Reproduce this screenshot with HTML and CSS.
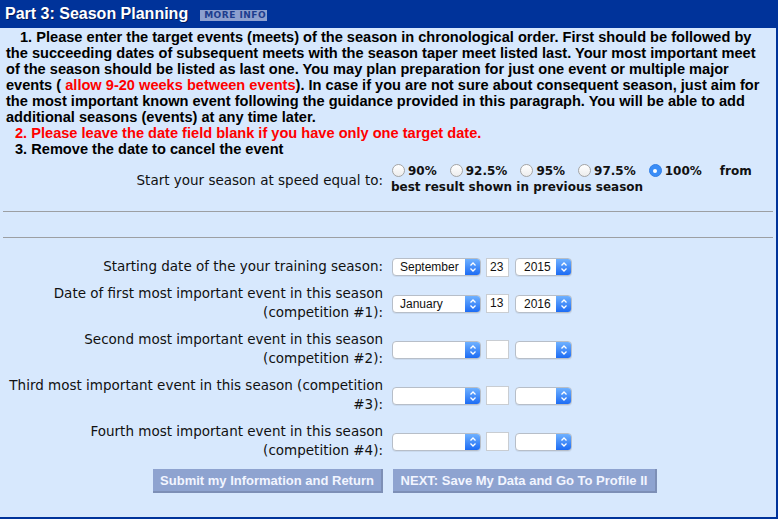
FILE: index.html
```html
<!DOCTYPE html>
<html>
<head>
<meta charset="utf-8">
<link rel="stylesheet" href="styles.css">
</head>
<body>
<div class="panel">
  <div class="header">
    <span class="title">Part 3: Season Planning</span>
    <span class="more">MORE INFO</span>
  </div>
  <div class="content">
    <div class="intro">
      <p class="p1">1. Please enter the target events (meets) of the season in chronological order. First should be followed by<br>the succeeding dates of subsequent meets with the season taper meet listed last. Your most important meet<br>of the season should be listed as last one. You may plan preparation for just one event or multiple major<br>events ( <span class="red">allow 9-20 weeks between events</span>). In case if you are not sure about consequent season, just aim for<br>the most important known event following the guidance provided in this paragraph. You will be able to add<br>additional seasons (events) at any time later.</p>
      <p class="note red">2. Please leave the date field blank if you have only one target date.</p>
      <p class="note">3. Remove the date to cancel the event</p>
    </div>

    <div class="grid speed">
      <div class="lbl">Start your season at speed equal to:</div>
      <div class="opts">
        <div class="opt-line">
          <span class="opt"><span class="radio"></span>90%</span>
          <span class="opt"><span class="radio"></span>92.5%</span>
          <span class="opt"><span class="radio"></span>95%</span>
          <span class="opt"><span class="radio"></span>97.5%</span>
          <span class="opt"><span class="radio on"></span>100%</span>
          <span class="from">from</span>
        </div>
        <div class="opt-sub">best result shown in previous season</div>
      </div>
    </div>

    <div class="rule first"></div>
    <div class="rule second"></div>

    <div class="grid dates">
      <div class="lbl">Starting date of the your training season:</div>
      <div class="ctrls">
        <span class="sel month"><span class="val">September</span><span class="btn"><svg width="14" height="16" viewBox="0 0 14 16"><polyline points="4.5,6.5 7,4 9.5,6.5" /><polyline points="4.5,9.5 7,12 9.5,9.5" /></svg></span></span>
        <span class="day">23</span>
        <span class="sel year"><span class="val">2015</span><span class="btn"><svg width="14" height="16" viewBox="0 0 14 16"><polyline points="4.5,6.5 7,4 9.5,6.5" /><polyline points="4.5,9.5 7,12 9.5,9.5" /></svg></span></span>
      </div>

      <div class="lbl">Date of first most important event in this season<br>(competition #1):</div>
      <div class="ctrls">
        <span class="sel month"><span class="val">January</span><span class="btn"><svg width="14" height="16" viewBox="0 0 14 16"><polyline points="4.5,6.5 7,4 9.5,6.5" /><polyline points="4.5,9.5 7,12 9.5,9.5" /></svg></span></span>
        <span class="day">13</span>
        <span class="sel year"><span class="val">2016</span><span class="btn"><svg width="14" height="16" viewBox="0 0 14 16"><polyline points="4.5,6.5 7,4 9.5,6.5" /><polyline points="4.5,9.5 7,12 9.5,9.5" /></svg></span></span>
      </div>

      <div class="lbl">Second most important event in this season<br>(competition #2):</div>
      <div class="ctrls">
        <span class="sel month"><span class="val"></span><span class="btn"><svg width="14" height="16" viewBox="0 0 14 16"><polyline points="4.5,6.5 7,4 9.5,6.5" /><polyline points="4.5,9.5 7,12 9.5,9.5" /></svg></span></span>
        <span class="day"></span>
        <span class="sel year"><span class="val"></span><span class="btn"><svg width="14" height="16" viewBox="0 0 14 16"><polyline points="4.5,6.5 7,4 9.5,6.5" /><polyline points="4.5,9.5 7,12 9.5,9.5" /></svg></span></span>
      </div>

      <div class="lbl">Third most important event in this season (competition<br>#3):</div>
      <div class="ctrls">
        <span class="sel month"><span class="val"></span><span class="btn"><svg width="14" height="16" viewBox="0 0 14 16"><polyline points="4.5,6.5 7,4 9.5,6.5" /><polyline points="4.5,9.5 7,12 9.5,9.5" /></svg></span></span>
        <span class="day"></span>
        <span class="sel year"><span class="val"></span><span class="btn"><svg width="14" height="16" viewBox="0 0 14 16"><polyline points="4.5,6.5 7,4 9.5,6.5" /><polyline points="4.5,9.5 7,12 9.5,9.5" /></svg></span></span>
      </div>

      <div class="lbl">Fourth most important event in this season<br>(competition #4):</div>
      <div class="ctrls">
        <span class="sel month"><span class="val"></span><span class="btn"><svg width="14" height="16" viewBox="0 0 14 16"><polyline points="4.5,6.5 7,4 9.5,6.5" /><polyline points="4.5,9.5 7,12 9.5,9.5" /></svg></span></span>
        <span class="day"></span>
        <span class="sel year"><span class="val"></span><span class="btn"><svg width="14" height="16" viewBox="0 0 14 16"><polyline points="4.5,6.5 7,4 9.5,6.5" /><polyline points="4.5,9.5 7,12 9.5,9.5" /></svg></span></span>
      </div>
    </div>

    <div class="grid actions">
      <div class="act-left"><button class="button submit">Submit my Information and Return</button></div>
      <div class="act-right"><button class="button next">NEXT: Save My Data and Go To Profile II</button></div>
    </div>
  </div>
</div>
</body>
</html>
```
FILE: styles.css
```css
html, body {
  margin: 0;
  padding: 0;
  background: #ffffff;
}

.panel {
  width: 778px;
  height: 519px;
  box-sizing: border-box;
  border-right: 2px solid #00339a;
  border-bottom: 2px solid #00339a;
  background: #d7e8fd;
  font-family: "Liberation Sans", Arial, sans-serif;
  color: #000;
  overflow: hidden;
}

.header {
  height: 28px;
  background: #00339a;
  display: flex;
  align-items: center;
  padding-left: 5px;
}

.title {
  color: #ffffff;
  font-weight: bold;
  font-size: 16px;
  text-shadow: 1px 1px 0 #001a5c;
}

.more {
  margin-left: 12px;
  margin-top: 2px;
  background: #8ca0cf;
  color: #1d3d8e;
  font-family: "DejaVu Sans", Verdana, sans-serif;
  font-weight: bold;
  font-size: 9px;
  letter-spacing: 0.5px;
  line-height: 11px;
  padding: 0 1px 0 4px;
}

.intro {
  padding: 1px 0 0 6px;
  font-weight: bold;
  font-size: 14.6px;
  line-height: 16px;
  white-space: nowrap;
}

.intro p {
  margin: 0;
}

.p1 {
  text-indent: 14px;
}

.note {
  padding-left: 9px;
}

.red {
  color: #ff0000;
}

.grid {
  display: grid;
  grid-template-columns: 378px auto;
  column-gap: 8px;
  padding-left: 5px;
}

.lbl {
  text-align: right;
  font-family: "DejaVu Sans", "Lucida Grande", sans-serif;
  font-size: 13.5px;
  line-height: 19px;
  white-space: nowrap;
  color: #111;
}

.speed {
  margin-top: 5px;
  align-items: center;
}

.speed .lbl {
  margin-top: 2px;
}

.opts {
  font-family: "DejaVu Sans", Verdana, sans-serif;
  font-weight: bold;
  font-size: 12px;
  color: #111;
}

.opt-line {
  height: 17px;
  display: flex;
  align-items: center;
}

.opt {
  display: inline-flex;
  align-items: center;
  margin-right: 13px;
}

.opt:first-child {
  margin-left: 1px;
}

.radio {
  width: 13px;
  height: 13px;
  box-sizing: border-box;
  border-radius: 50%;
  border: 1px solid #a4a4a4;
  background: linear-gradient(#ffffff, #ededed);
  margin-right: 3px;
  display: inline-flex;
  align-items: center;
  justify-content: center;
}

.radio.on {
  background: #3a8df7;
  border-color: #3380e6;
}

.radio.on::after {
  content: "";
  width: 4px;
  height: 4px;
  border-radius: 50%;
  background: #ffffff;
}

.from {
  margin-left: 5px;
}

.opt-sub {
  height: 17px;
  line-height: 17px;
}

.rule {
  margin-left: 3px;
  margin-right: 3px;
  border-top: 1px solid #9c9fa3;
}

.rule.first {
  margin-top: 15px;
}

.rule.second {
  margin-top: 25px;
}

.dates {
  margin-top: 15px;
  align-items: center;
}

.dates .lbl {
  padding: 4px 0;
}

.ctrls {
  display: flex;
  align-items: center;
  margin-top: 1px;
  margin-left: 1px;
}

.sel {
  display: inline-flex;
  height: 18px;
  box-sizing: border-box;
  border: 1px solid #b7bec8;
  border-radius: 4px;
  background: #ffffff;
  overflow: hidden;
  box-shadow: 0 1px 0 rgba(0, 0, 0, 0.06);
}

.sel.month {
  width: 89px;
}

.sel.year {
  width: 57px;
}

.val {
  flex: 1;
  padding-left: 7px;
  font-size: 12px;
  line-height: 16px;
  color: #111;
}

.sel.year .val {
  padding-left: 8px;
}

.btn {
  width: 15px;
  background: linear-gradient(#6fb1ff, #1d6cf4);
  display: flex;
  align-items: center;
  justify-content: center;
}

.btn svg polyline {
  fill: none;
  stroke: #ffffff;
  stroke-width: 1.3;
}

.day {
  width: 23px;
  height: 19px;
  box-sizing: border-box;
  border: 1px solid #c9cdd2;
  background: #ffffff;
  margin: 0 6px 0 5px;
  font-size: 12px;
  line-height: 17px;
  padding-left: 3px;
  color: #111;
}

.actions {
  margin-top: 5px;
  column-gap: 10px;
}

.act-left {
  text-align: right;
}

.button {
  height: 24px;
  box-sizing: border-box;
  border: none;
  border-right: 2px solid #7d8fb6;
  border-bottom: 2px solid #7d8fb6;
  background: #8ea3d0;
  color: #f2f5ff;
  font-family: "Liberation Sans", Arial, sans-serif;
  font-weight: bold;
  font-size: 13px;
  padding: 0 6px;
  margin: 0;
}

.submit {
  width: 230px;
}

.next {
  width: 264px;
}
```
